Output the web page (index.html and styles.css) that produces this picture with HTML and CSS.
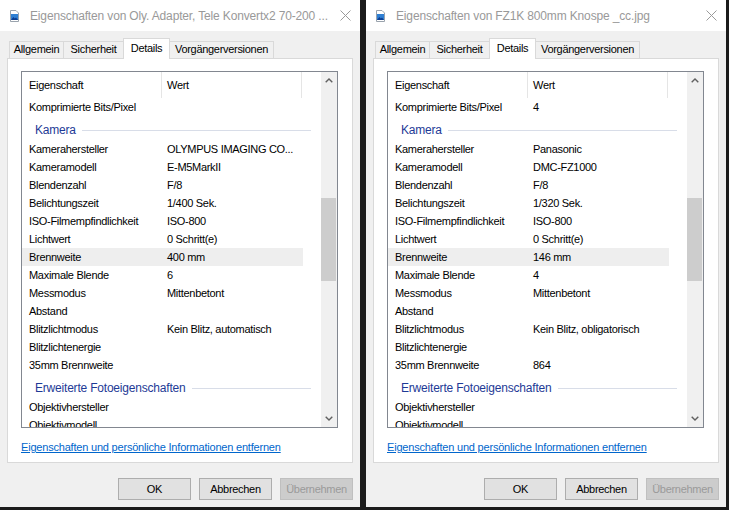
FILE: index.html
```html
<!DOCTYPE html>
<html lang="de">
<head>
<meta charset="utf-8">
<title>Eigenschaften</title>
<link rel="stylesheet" href="styles.css">
</head>
<body>
<div class="screen">
  <div class="window">
    <div class="titlebar">
      <svg class="title-icon" viewBox="0 0 9 12"><path d="M0.5 0.5h5.5l2.5 2.5v8.5h-8z" fill="#fff" stroke="#9aa3ad"/><rect x="1" y="4" width="7" height="6" fill="#2f7fd3"/><path d="M1 10l2.3-3 1.5 1.6 1.2-1.2 2 2.6z" fill="#0b3d91"/></svg>
      <span class="title">Eigenschaften von Oly. Adapter, Tele Konvertx2 70-200 ...</span>
      <svg class="close" viewBox="0 0 11 11"><path d="M0.5 0.5l10 10M10.5 0.5l-10 10" stroke="#9a9a9a" stroke-width="1"/></svg>
    </div>
    <div class="body">
      <div class="tabs">
        <div class="tab t1">Allgemein</div>
        <div class="tab t2">Sicherheit</div>
        <div class="tab t3 active">Details</div>
        <div class="tab t4">Vorgängerversionen</div>
      </div>
      <div class="panel">
        <div class="listbox">
          <div class="list">
            <div class="header"><span class="hc1">Eigenschaft</span><span class="hc2">Wert</span><span class="hc3"></span></div>
            <div class="row"><span class="name">Komprimierte Bits/Pixel</span><span class="val"></span></div>
            <div class="group"><span class="gname">Kamera</span><span class="gline"></span></div>
            <div class="row"><span class="name">Kamerahersteller</span><span class="val">OLYMPUS IMAGING CO...</span></div>
            <div class="row"><span class="name">Kameramodell</span><span class="val">E-M5MarkII</span></div>
            <div class="row"><span class="name">Blendenzahl</span><span class="val">F/8</span></div>
            <div class="row"><span class="name">Belichtungszeit</span><span class="val">1/400 Sek.</span></div>
            <div class="row"><span class="name">ISO-Filmempfindlichkeit</span><span class="val">ISO-800</span></div>
            <div class="row"><span class="name">Lichtwert</span><span class="val">0 Schritt(e)</span></div>
            <div class="row sel"><span class="name">Brennweite</span><span class="val">400 mm</span></div>
            <div class="row"><span class="name">Maximale Blende</span><span class="val">6</span></div>
            <div class="row"><span class="name">Messmodus</span><span class="val">Mittenbetont</span></div>
            <div class="row"><span class="name">Abstand</span><span class="val"></span></div>
            <div class="row"><span class="name">Blitzlichtmodus</span><span class="val">Kein Blitz, automatisch</span></div>
            <div class="row"><span class="name">Blitzlichtenergie</span><span class="val"></span></div>
            <div class="row"><span class="name">35mm Brennweite</span><span class="val"></span></div>
            <div class="group"><span class="gname">Erweiterte Fotoeigenschaften</span><span class="gline"></span></div>
            <div class="row"><span class="name">Objektivhersteller</span><span class="val"></span></div>
            <div class="row"><span class="name">Objektivmodell</span><span class="val"></span></div>
          </div>
          <div class="scrollbar">
            <div class="sbtn"><svg viewBox="0 0 8 5"><path d="M0.7 4.3L4 1l3.3 3.3" fill="none" stroke="#606060" stroke-width="1.4"/></svg></div>
            <div class="track"><div class="thumb"></div></div>
            <div class="sbtn"><svg viewBox="0 0 8 5"><path d="M0.7 0.7L4 4l3.3-3.3" fill="none" stroke="#606060" stroke-width="1.4"/></svg></div>
          </div>
        </div>
        <a class="link" href="#">Eigenschaften und persönliche Informationen entfernen</a>
      </div>
      <div class="buttons">
        <div class="btn">OK</div>
        <div class="btn">Abbrechen</div>
        <div class="btn disabled">Übernehmen</div>
      </div>
    </div>
  </div>

  <div class="window">
    <div class="titlebar">
      <svg class="title-icon" viewBox="0 0 9 12"><path d="M0.5 0.5h5.5l2.5 2.5v8.5h-8z" fill="#fff" stroke="#9aa3ad"/><rect x="1" y="4" width="7" height="6" fill="#2f7fd3"/><path d="M1 10l2.3-3 1.5 1.6 1.2-1.2 2 2.6z" fill="#0b3d91"/></svg>
      <span class="title">Eigenschaften von FZ1K 800mm Knospe _cc.jpg</span>
      <svg class="close" viewBox="0 0 11 11"><path d="M0.5 0.5l10 10M10.5 0.5l-10 10" stroke="#9a9a9a" stroke-width="1"/></svg>
    </div>
    <div class="body">
      <div class="tabs">
        <div class="tab t1">Allgemein</div>
        <div class="tab t2">Sicherheit</div>
        <div class="tab t3 active">Details</div>
        <div class="tab t4">Vorgängerversionen</div>
      </div>
      <div class="panel">
        <div class="listbox">
          <div class="list">
            <div class="header"><span class="hc1">Eigenschaft</span><span class="hc2">Wert</span><span class="hc3"></span></div>
            <div class="row"><span class="name">Komprimierte Bits/Pixel</span><span class="val">4</span></div>
            <div class="group"><span class="gname">Kamera</span><span class="gline"></span></div>
            <div class="row"><span class="name">Kamerahersteller</span><span class="val">Panasonic</span></div>
            <div class="row"><span class="name">Kameramodell</span><span class="val">DMC-FZ1000</span></div>
            <div class="row"><span class="name">Blendenzahl</span><span class="val">F/8</span></div>
            <div class="row"><span class="name">Belichtungszeit</span><span class="val">1/320 Sek.</span></div>
            <div class="row"><span class="name">ISO-Filmempfindlichkeit</span><span class="val">ISO-800</span></div>
            <div class="row"><span class="name">Lichtwert</span><span class="val">0 Schritt(e)</span></div>
            <div class="row sel"><span class="name">Brennweite</span><span class="val">146 mm</span></div>
            <div class="row"><span class="name">Maximale Blende</span><span class="val">4</span></div>
            <div class="row"><span class="name">Messmodus</span><span class="val">Mittenbetont</span></div>
            <div class="row"><span class="name">Abstand</span><span class="val"></span></div>
            <div class="row"><span class="name">Blitzlichtmodus</span><span class="val">Kein Blitz, obligatorisch</span></div>
            <div class="row"><span class="name">Blitzlichtenergie</span><span class="val"></span></div>
            <div class="row"><span class="name">35mm Brennweite</span><span class="val">864</span></div>
            <div class="group"><span class="gname">Erweiterte Fotoeigenschaften</span><span class="gline"></span></div>
            <div class="row"><span class="name">Objektivhersteller</span><span class="val"></span></div>
            <div class="row"><span class="name">Objektivmodell</span><span class="val"></span></div>
          </div>
          <div class="scrollbar">
            <div class="sbtn"><svg viewBox="0 0 8 5"><path d="M0.7 4.3L4 1l3.3 3.3" fill="none" stroke="#606060" stroke-width="1.4"/></svg></div>
            <div class="track"><div class="thumb"></div></div>
            <div class="sbtn"><svg viewBox="0 0 8 5"><path d="M0.7 0.7L4 4l3.3-3.3" fill="none" stroke="#606060" stroke-width="1.4"/></svg></div>
          </div>
        </div>
        <a class="link" href="#">Eigenschaften und persönliche Informationen entfernen</a>
      </div>
      <div class="buttons">
        <div class="btn">OK</div>
        <div class="btn">Abbrechen</div>
        <div class="btn disabled">Übernehmen</div>
      </div>
    </div>
  </div>
</div>
</body>
</html>
```
FILE: styles.css
```css
* { box-sizing: border-box; }
html, body { margin: 0; padding: 0; }
body {
  width: 729px;
  height: 510px;
  overflow: hidden;
  background: #1b1b1b;
  font-family: "Liberation Sans", Arial, sans-serif;
  font-size: 11px;
  letter-spacing: -0.3px;
  color: #000;
}
.screen { display: flex; gap: 6px; height: 507px; }
.window {
  width: 360px;
  height: 507px;
  background: #f0f0f0;
  display: flex;
  flex-direction: column;
}
.titlebar {
  height: 31px;
  flex: none;
  background: #fff;
  display: flex;
  align-items: center;
  padding-left: 10px;
}
.title-icon { width: 9px; height: 12px; margin-right: 11px; flex: none; }
.title {
  flex: 1;
  font-size: 12px;
  color: #999;
  white-space: nowrap;
  letter-spacing: -0.15px;
}
.close { width: 11px; height: 11px; margin-right: 9px; flex: none; }

.body { padding: 0 7px; display: flex; flex-direction: column; }
.tabs {
  margin-top: 7px;
  height: 20px;
  display: flex;
  align-items: flex-end;
  padding-left: 2px;
}
.tab {
  height: 17px;
  border: 1px solid #d9d9d9;
  border-bottom: none;
  background: #f0f0f0;
  text-align: center;
  line-height: 15px;
  white-space: nowrap;
}
.tab + .tab { margin-left: -1px; }
.t1 { width: 55px; }
.t2 { width: 61px; }
.t3 { width: 47px; }
.t4 { width: 105px; }
.tab.active {
  height: 21px;
  background: #fff;
  margin-bottom: -1px;
  line-height: 18px;
  position: relative;
  z-index: 1;
}

.panel {
  height: 405px;
  background: #fff;
  border: 1px solid #d9d9d9;
  padding: 12px 0 0 13px;
  display: flex;
  flex-direction: column;
}
.listbox {
  width: 317px;
  height: 357px;
  border: 1px solid #828790;
  display: flex;
}
.list {
  width: 299px;
  overflow: hidden;
  display: flex;
  flex-direction: column;
}
.header { height: 26px; flex: none; display: flex; }
.header span { height: 26px; line-height: 26px; }
.hc1 { width: 140px; padding-left: 7px; border-right: 1px solid #e5e5e5; }
.hc2 { width: 140px; padding-left: 5px; border-right: 1px solid #e5e5e5; }
.hc3 { flex: 1; }

.row {
  height: 18px;
  flex: none;
  width: 281px;
  display: flex;
  align-items: center;
  white-space: nowrap;
}
.row.sel { background: #eeeeee; }
.name { width: 145px; padding-left: 7px; flex: none; }
.val { flex: 1; }

.group {
  height: 24px;
  flex: none;
  width: 289px;
  display: flex;
  align-items: center;
  padding: 4px 0 0 13px;
}
.gname { color: #1e3a96; font-size: 12px; letter-spacing: -0.2px; white-space: nowrap; }
.gline { flex: 1; height: 1px; background: #d8dde8; margin-left: 6px; }

.scrollbar {
  width: 16px;
  background: #f0f0f0;
  display: flex;
  flex-direction: column;
}
.sbtn { height: 17px; display: flex; align-items: center; justify-content: center; }
.sbtn svg { width: 8px; height: 5px; }
.track { flex: 1; }
.thumb { margin: 109px 1px 0 0; height: 83px; background: #cdcdcd; }

.link {
  margin-top: 12px;
  line-height: 14px;
  color: #0066cc;
  text-decoration: underline;
  letter-spacing: -0.2px;
  align-self: flex-start;
}

.buttons {
  margin-top: 15px;
  display: flex;
  justify-content: flex-end;
  gap: 8px;
}
.btn {
  width: 73px;
  height: 22px;
  background: #e1e1e1;
  border: 1px solid #adadad;
  text-align: center;
  line-height: 20px;
}
.btn.disabled { background: #cccccc; border-color: #bfbfbf; color: #9a9a9a; }
```
